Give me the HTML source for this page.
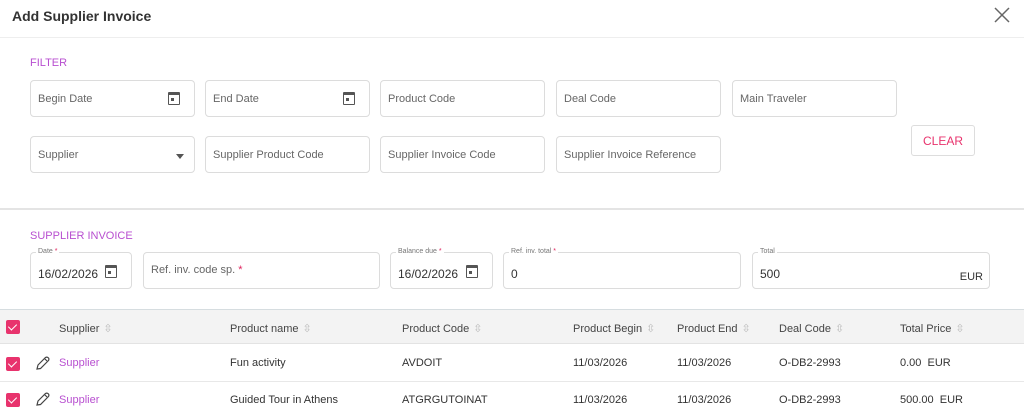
<!DOCTYPE html>
<html><head><style>
*{box-sizing:border-box;margin:0;padding:0}
body{width:1024px;height:416px;overflow:hidden;background:#fff;font-family:"Liberation Sans",sans-serif;font-size:11px;color:#333;position:relative}
.a{position:absolute}
.in{position:absolute;border:1px solid #dcdcdc;border-radius:4px;height:37px;color:#666;font-size:11px;padding-left:7px;line-height:37px;background:#fff}
.cal{position:absolute;right:14px;top:11px;width:12px;height:13px;border:1.6px solid #555;border-top-width:3px;border-radius:1px}
.cal:after{content:"";position:absolute;left:2px;top:3px;width:3px;height:3px;background:#555}
.lab{position:absolute;top:-6px;left:5px;background:#fff;padding:0 2px;font-size:7px;line-height:10px;color:#777}
.req{color:#e0245e}
.sec{color:#b84fd0;font-size:11px}
.cb{position:absolute;width:14px;height:14px;background:#e8336d;border-radius:2px}
.cb:after{content:"";position:absolute;left:4px;top:2px;width:4px;height:7px;border:solid #fff;border-width:0 1.5px 1.5px 0;transform:rotate(45deg)}
.th{position:absolute;top:322px;font-size:11px;color:#444}
.s{color:#bbb;font-size:11px;margin-left:4px}
.td{position:absolute;font-size:11px;color:#333}
</style></head><body>
<div class="a" style="left:12px;top:8px;font-size:14px;font-weight:bold;color:#333">Add Supplier Invoice</div>
<svg class="a" style="left:994px;top:7px" width="16" height="16"><path d="M1 1L15 15M15 1L1 15" stroke="#666" stroke-width="1.5"/></svg>
<div class="a" style="left:0;top:37px;width:1024px;height:1px;background:#eee"></div>
<div class="a sec" style="left:30px;top:57px">FILTER</div>
<div class="in" style="left:30px;top:80px;width:165px">Begin Date<div class="cal"></div></div>
<div class="in" style="left:205px;top:80px;width:165px">End Date<div class="cal"></div></div>
<div class="in" style="left:380px;top:80px;width:165px">Product Code</div>
<div class="in" style="left:556px;top:80px;width:165px">Deal Code</div>
<div class="in" style="left:732px;top:80px;width:165px">Main Traveler</div>
<div class="in" style="left:30px;top:136px;width:165px">Supplier<div class="a" style="right:10px;top:17px;border:4.5px solid transparent;border-top:5px solid #555;border-bottom:0"></div></div>
<div class="in" style="left:205px;top:136px;width:165px">Supplier Product Code</div>
<div class="in" style="left:380px;top:136px;width:165px">Supplier Invoice Code</div>
<div class="in" style="left:556px;top:136px;width:165px">Supplier Invoice Reference</div>
<div class="a" style="left:911px;top:125px;width:64px;height:31px;border:1px solid #ddd;border-radius:3px;color:#e8336d;font-size:12px;text-align:center;line-height:31px">CLEAR</div>
<div class="a" style="left:0;top:208px;width:1024px;height:2px;background:#e4e4e4"></div>
<div class="a sec" style="left:30px;top:230px">SUPPLIER INVOICE</div>
<div class="in" style="left:30px;top:252px;width:102px;color:#333;line-height:43px;font-size:12px"><span class="lab">Date <span class="req">*</span></span>16/02/2026<div class="cal" style="top:12px"></div></div>
<div class="in" style="left:143px;top:252px;width:237px;line-height:35px">Ref. inv. code sp. <span class="req">*</span></div>
<div class="in" style="left:390px;top:252px;width:103px;color:#333;line-height:43px;font-size:12px"><span class="lab">Balance due <span class="req">*</span></span>16/02/2026<div class="cal" style="top:12px"></div></div>
<div class="in" style="left:503px;top:252px;width:238px;color:#333;font-size:12px;line-height:42px"><span class="lab">Ref. inv. total <span class="req">*</span></span>0</div>
<div class="in" style="left:752px;top:252px;width:238px;color:#333;font-size:12px;line-height:42px"><span class="lab">Total</span>500<span class="a" style="right:6px;top:17px;font-size:11px;line-height:14px">EUR</span></div>
<div class="a" style="left:0;top:309px;width:1024px;height:35px;background:#f3f3f3;border-top:1px solid #d6dde0;border-bottom:1px solid #e3e3e3"></div>
<div class="cb" style="left:6px;top:320px"></div>
<div class="th" style="left:59px">Supplier<span class="s">⇳</span></div>
<div class="th" style="left:230px">Product name<span class="s">⇳</span></div>
<div class="th" style="left:402px">Product Code<span class="s">⇳</span></div>
<div class="th" style="left:573px">Product Begin<span class="s">⇳</span></div>
<div class="th" style="left:677px">Product End<span class="s">⇳</span></div>
<div class="th" style="left:779px">Deal Code<span class="s">⇳</span></div>
<div class="th" style="left:900px">Total Price<span class="s">⇳</span></div>
<div class="a" style="left:0;top:381px;width:1024px;height:1px;background:#e8e8e8"></div>
<div class="cb" style="left:6px;top:357px"></div>
<div class="cb" style="left:6px;top:393px"></div>
<svg class="a" style="left:35px;top:356px" width="15" height="15"><path d="M2 13L3 9L10.5 1.5Q12 0.5 13.5 2Q14.5 3.5 13 5L5.5 12.5Z M9.5 2.5L12 5" fill="none" stroke="#444" stroke-width="1.2"/></svg>
<svg class="a" style="left:35px;top:392px" width="15" height="15"><path d="M2 13L3 9L10.5 1.5Q12 0.5 13.5 2Q14.5 3.5 13 5L5.5 12.5Z M9.5 2.5L12 5" fill="none" stroke="#444" stroke-width="1.2"/></svg>
<div class="td" style="left:59px;top:357px;color:#b84fd0">Supplier</div>
<div class="td" style="left:230px;top:357px">Fun activity</div>
<div class="td" style="left:402px;top:357px">AVDOIT</div>
<div class="td" style="left:573px;top:357px">11/03/2026</div>
<div class="td" style="left:677px;top:357px">11/03/2026</div>
<div class="td" style="left:779px;top:357px">O-DB2-2993</div>
<div class="td" style="left:900px;top:357px">0.00&nbsp; EUR</div>
<div class="td" style="left:59px;top:394px;color:#b84fd0">Supplier</div>
<div class="td" style="left:230px;top:394px">Guided Tour in Athens</div>
<div class="td" style="left:402px;top:394px">ATGRGUTOINAT</div>
<div class="td" style="left:573px;top:394px">11/03/2026</div>
<div class="td" style="left:677px;top:394px">11/03/2026</div>
<div class="td" style="left:779px;top:394px">O-DB2-2993</div>
<div class="td" style="left:900px;top:394px">500.00&nbsp; EUR</div>
</body></html>
